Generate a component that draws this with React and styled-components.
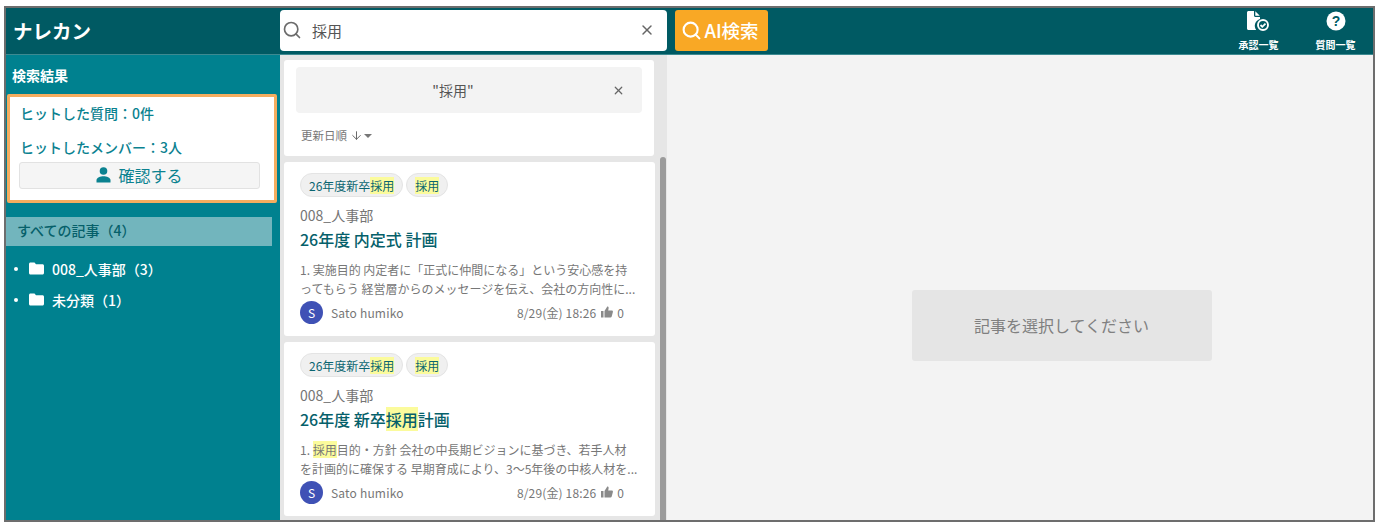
import React from 'react';
import styled, { createGlobalStyle } from 'styled-components';
import { Search, X, ArrowDown } from 'lucide-react';

const Global = createGlobalStyle`
  html, body { margin: 0; padding: 0; background: #fff; }
  body { font-family: "Noto Sans CJK JP", "Noto Sans", sans-serif; }
  * { box-sizing: border-box; }
`;
const Page = styled.div`
  width: 1380px; height: 528px; padding: 6px 5px 6px 4px;
`;
const Frame = styled.div`
  width: 100%; height: 100%; border: 2px solid #6d6d6d; display: flex; flex-direction: column; overflow: hidden;
`;
const Header = styled.header`
  height: 47px; flex: none; background: #005a63; display: flex; align-items: center; border-bottom: 1px solid #3d8a91; padding-bottom: 2px;
`;
const Logo = styled.div`
  width: 274px; padding-left: 7px; color: #fff; font-size: 19.5px; font-weight: 700; line-height: 46px; margin-top: 2px;
`;
const SearchBox = styled.div`
  width: 387px; height: 41px; background: #fff; border-radius: 4px; display: flex; align-items: center; padding: 0 12px 0 2px; color: #666;
`;
const SearchText = styled.div`
  flex: 1; font-size: 15px; color: #555; padding-left: 10px;
`;
const AiButton = styled.button`
  margin-left: 8px; width: 93px; height: 41px; border: 0; border-radius: 3px; background: #f9a825; color: #fff; font: 500 18.5px "Noto Sans CJK JP", sans-serif;
  display: flex; align-items: center; justify-content: center; gap: 2px; padding: 0 3px 0 0; white-space: nowrap;
`;
const HeaderNav = styled.nav`
  margin-left: auto; display: flex; gap: 36px; padding-right: 17px; margin-top: 1px;
`;
const NavItem = styled.div`
  display: flex; flex-direction: column; align-items: center; color: #fff; font-size: 10px; font-weight: 700; gap: 7px; width: 41px; line-height: 13px; white-space: nowrap;
`;
const Body = styled.div`
  flex: 1; min-height: 0; display: flex;
`;
const Sidebar = styled.aside`
  width: 274px; flex: none; background: #00818f; padding-top: 11px; display: flex; flex-direction: column;
`;
const SideTitle = styled.div`
  color: #fff; font-size: 14px; font-weight: 700; line-height: 18px; padding-left: 6px;
`;
const HitBox = styled.div`
  margin: 10px 0 0 1px; width: 270px; height: 109px; border: 3px solid #f5ad5f; border-radius: 2px; background: #fff;
  padding: 6px 14px 0 9px; color: #0b8290; font-size: 14px; font-weight: 500;
`;
const HitRow = styled.div`
  line-height: 20px; height: 33px; padding-left: 1px; padding-top: ${(p) => (p.$low ? '1px' : '0')};
`;
const Confirm = styled.div`
  height: 27px; margin-top: -7px; background: #f5f5f5; border: 1px solid #e2e2e2; border-radius: 3px; display: flex; align-items: center; justify-content: center; gap: 7px; padding-bottom: 1px;
  color: #0b8290; font-size: 16px; font-weight: 400;
`;
const AllBar = styled.div`
  margin-top: 14px; width: 266px; height: 29px; background: #72b5bd; color: #06606a; font-size: 14px; font-weight: 500; line-height: 27px; padding-left: 11px;
`;
const Tree = styled.ul`
  list-style: none; margin: 7px 0 0; padding: 0 0 0 8px;
`;
const TreeItem = styled.li`
  height: 31px; display: flex; align-items: center; color: #fff; font-size: 14px; font-weight: 500;
  &::before { content: ""; width: 4px; height: 4px; border-radius: 50%; background: #fff; margin-right: 11px; }
`;
const TreeLabel = styled.span` margin-left: 8px; `;
const Middle = styled.section`
  position: relative; width: 387px; flex: none; background: #e6e6e6; padding: 5px 12px 0 4px; overflow: hidden;
`;
const FilterPanel = styled.div`
  width: 370px; height: 96px; background: #fff; border-radius: 3px; padding: 7px 12px 0;
`;
const Keyword = styled.div`
  height: 46px; background: #f3f3f3; border-radius: 4px; display: flex; align-items: center; padding: 0 17px 0 0; color: #555; font-size: 14px;
`;
const KeywordText = styled.div` flex: 1; text-align: center; padding-right: 2px; `;
const Sort = styled.div`
  margin: 14px 0 0 5px; display: flex; align-items: center; color: #777; font-size: 11.5px; line-height: 17px;
`;
const SortArrow = styled.span` display: flex; margin-left: 3px; `;
const Caret = styled.span`
  width: 0; height: 0; border: 4px solid transparent; border-top: 4px solid #777; border-bottom: 0; margin-left: 1px;
`;
const Card = styled.article`
  width: 371px; height: 174px; margin-top: 6px; background: #fff; border-radius: 3px; padding: 11px 16px 0;
`;
const Tags = styled.div` display: flex; gap: 3px; `;
const Tag = styled.span`
  height: 24px; border-radius: 12px; background: #f0f0f0; border: 1px solid #e4e4e4; padding: 0 8px; font-size: 12px; line-height: 23px; color: #0a6570; white-space: nowrap;
`;
const Mark = styled.mark` background: #fbfb9c; color: inherit; `;
const Folderline = styled.div`
  margin-top: 8px; font-size: 14px; line-height: 20px; color: #757575;
`;
const Title = styled.h3`
  margin: 2px 0 0; font-size: 16px; font-weight: 500; line-height: 24px; color: #05606a;
`;
const Excerpt = styled.p`
  margin: 10px 0 0; font-size: 12px; line-height: 18.5px; color: #777; white-space: nowrap;
`;
const Meta = styled.div`
  display: flex; align-items: center; margin-top: 2px; height: 24px; font-size: 12px; color: #777;
`;
const Avatar = styled.span`
  width: 23px; height: 23px; border-radius: 50%; background: #3f51b5; color: #fff; font-size: 12px; display: flex; align-items: center; justify-content: center;
`;
const Author = styled.span` margin-left: 8px; flex: 1; font-size: 12px; letter-spacing: .18px; `;
const DateText = styled.span` font-size: 12px; letter-spacing: .15px; `;
const Likes = styled.span` display: flex; align-items: center; gap: 4px; margin: 0 15px 0 5px; `;
const ScrollThumb = styled.div`
  position: absolute; right: 1px; top: 102px; bottom: 0; width: 6px; background: #9b9b9b; border-radius: 3px 3px 0 0;
`;
const Main = styled.main`
  flex: 1; background: #f3f3f3; display: flex; align-items: center; justify-content: center;
`;
const Placeholder = styled.div`
  width: 300px; height: 71px; margin: 75px 1px 0 84px; padding-bottom: 1px; background: #e5e5e5; border-radius: 3px; display: flex; align-items: center; justify-content: center; color: #808080; font-size: 16px;
`;

const FileCheck = () => (
  <svg width="24" height="20" viewBox="0 0 24 20">
    <path fill="#fff" d="M0 1.500C0 .7.7 0 1.500 0H7v4.500c0 .8.7 1.500 1.500 1.500H13v2a7 7 0 0 0-3.800 11H1.500C.7 19 0 18.300 0 17.500ZM8.300 0.300L12.800 4.700H8.300Z" />
    <circle cx="16" cy="14" r="5" fill="none" stroke="#fff" strokeWidth="1.900" />
    <path d="M13.500 14l1.800 1.800 3.200-3.200" fill="none" stroke="#fff" strokeWidth="1.800" />
  </svg>
);
const Help = () => (
  <svg width="20" height="20" viewBox="0 0 20 20">
    <circle cx="10" cy="10" r="9.500" fill="#fff" />
    <text x="10" y="15" textAnchor="middle" fontSize="14" fontWeight="700" fontFamily="Liberation Sans, sans-serif" fill="#005a63">?</text>
  </svg>
);
const SolidFolder = () => (
  <svg width="15" height="13" viewBox="0 0 15 13"><path fill="#fff" d="M1.500 0.500h4l1.500 1.700h6.500c.8 0 1.500.7 1.500 1.500v7.300c0 .8-.7 1.500-1.500 1.500h-12C.7 12.500 0 11.800 0 11V2C0 1.200.7.500 1.500.500Z" /></svg>
);
const Person = () => (
  <svg width="15" height="16" viewBox="0 0 15 16" fill="#0b8290">
    <circle cx="7.500" cy="4" r="3.800" />
    <path d="M0.500 15.500v-2.500c0-2.500 4-3.800 7-3.800s7 1.300 7 3.800v2.500z" />
  </svg>
);
const Thumb = () => (
  <svg width="12" height="12" viewBox="0 0 12 12" fill="#8a8a8a">
    <path d="M0 5h2.500v6.500H0zM3.500 11.500V5L6.300.5c.9 0 1.500.7 1.300 1.700L7.200 4.500h3.500c.9 0 1.400.8 1.200 1.600l-1.200 4.500c-.2.600-.6.900-1.200.9z" />
  </svg>
);

const articles = [
  {
    title: <>26年度 内定式 計画</>,
    lines: [<>1. 実施目的 内定者に「正式に仲間になる」という安心感を持</>, <>ってもらう 経営層からのメッセージを伝え、会社の方向性に...</>],
  },
  {
    title: <>26年度 新卒<Mark>採用</Mark>計画</>,
    lines: [<>1. <Mark>採用</Mark>目的・方針 会社の中長期ビジョンに基づき、若手人材</>, <>を計画的に確保する 早期育成により、3〜5年後の中核人材を...</>],
  },
];

export default function App() {
  return (
    <Page>
      <Global />
      <Frame>
        <Header>
          <Logo>ナレカン</Logo>
          <SearchBox>
            <Search size={20} strokeWidth={2} color="#6b6b6b" />
            <SearchText>採用</SearchText>
            <X size={16} strokeWidth={2.2} color="#666" />
          </SearchBox>
          <AiButton><Search size={21} strokeWidth={2.4} />AI検索</AiButton>
          <HeaderNav>
            <NavItem><FileCheck />承認一覧</NavItem>
            <NavItem><Help />質問一覧</NavItem>
          </HeaderNav>
        </Header>
        <Body>
          <Sidebar>
            <SideTitle>検索結果</SideTitle>
            <HitBox>
              <HitRow>ヒットした質問：0件</HitRow>
              <HitRow $low>ヒットしたメンバー：3人</HitRow>
              <Confirm><Person />確認する</Confirm>
            </HitBox>
            <AllBar>すべての記事（4）</AllBar>
            <Tree>
              <TreeItem><SolidFolder /><TreeLabel>008_人事部（3）</TreeLabel></TreeItem>
              <TreeItem><SolidFolder /><TreeLabel>未分類（1）</TreeLabel></TreeItem>
            </Tree>
          </Sidebar>
          <Middle>
            <FilterPanel>
              <Keyword>
                <KeywordText>"採用"</KeywordText>
                <X size={13} strokeWidth={2.2} color="#666" />
              </Keyword>
              <Sort>更新日順<SortArrow><ArrowDown size={13} strokeWidth={1.8} color="#666" /></SortArrow><Caret /></Sort>
            </FilterPanel>
            {articles.map((a, i) => (
              <Card key={i}>
                <Tags>
                  <Tag>26年度新卒<Mark>採用</Mark></Tag>
                  <Tag><Mark>採用</Mark></Tag>
                </Tags>
                <Folderline>008_人事部</Folderline>
                <Title>{a.title}</Title>
                <Excerpt>{a.lines[0]}<br />{a.lines[1]}</Excerpt>
                <Meta>
                  <Avatar>S</Avatar>
                  <Author>Sato humiko</Author>
                  <DateText>8/29(金) 18:26</DateText>
                  <Likes><Thumb />0</Likes>
                </Meta>
              </Card>
            ))}
            <ScrollThumb />
          </Middle>
          <Main>
            <Placeholder>記事を選択してください</Placeholder>
          </Main>
        </Body>
      </Frame>
    </Page>
  );
}
